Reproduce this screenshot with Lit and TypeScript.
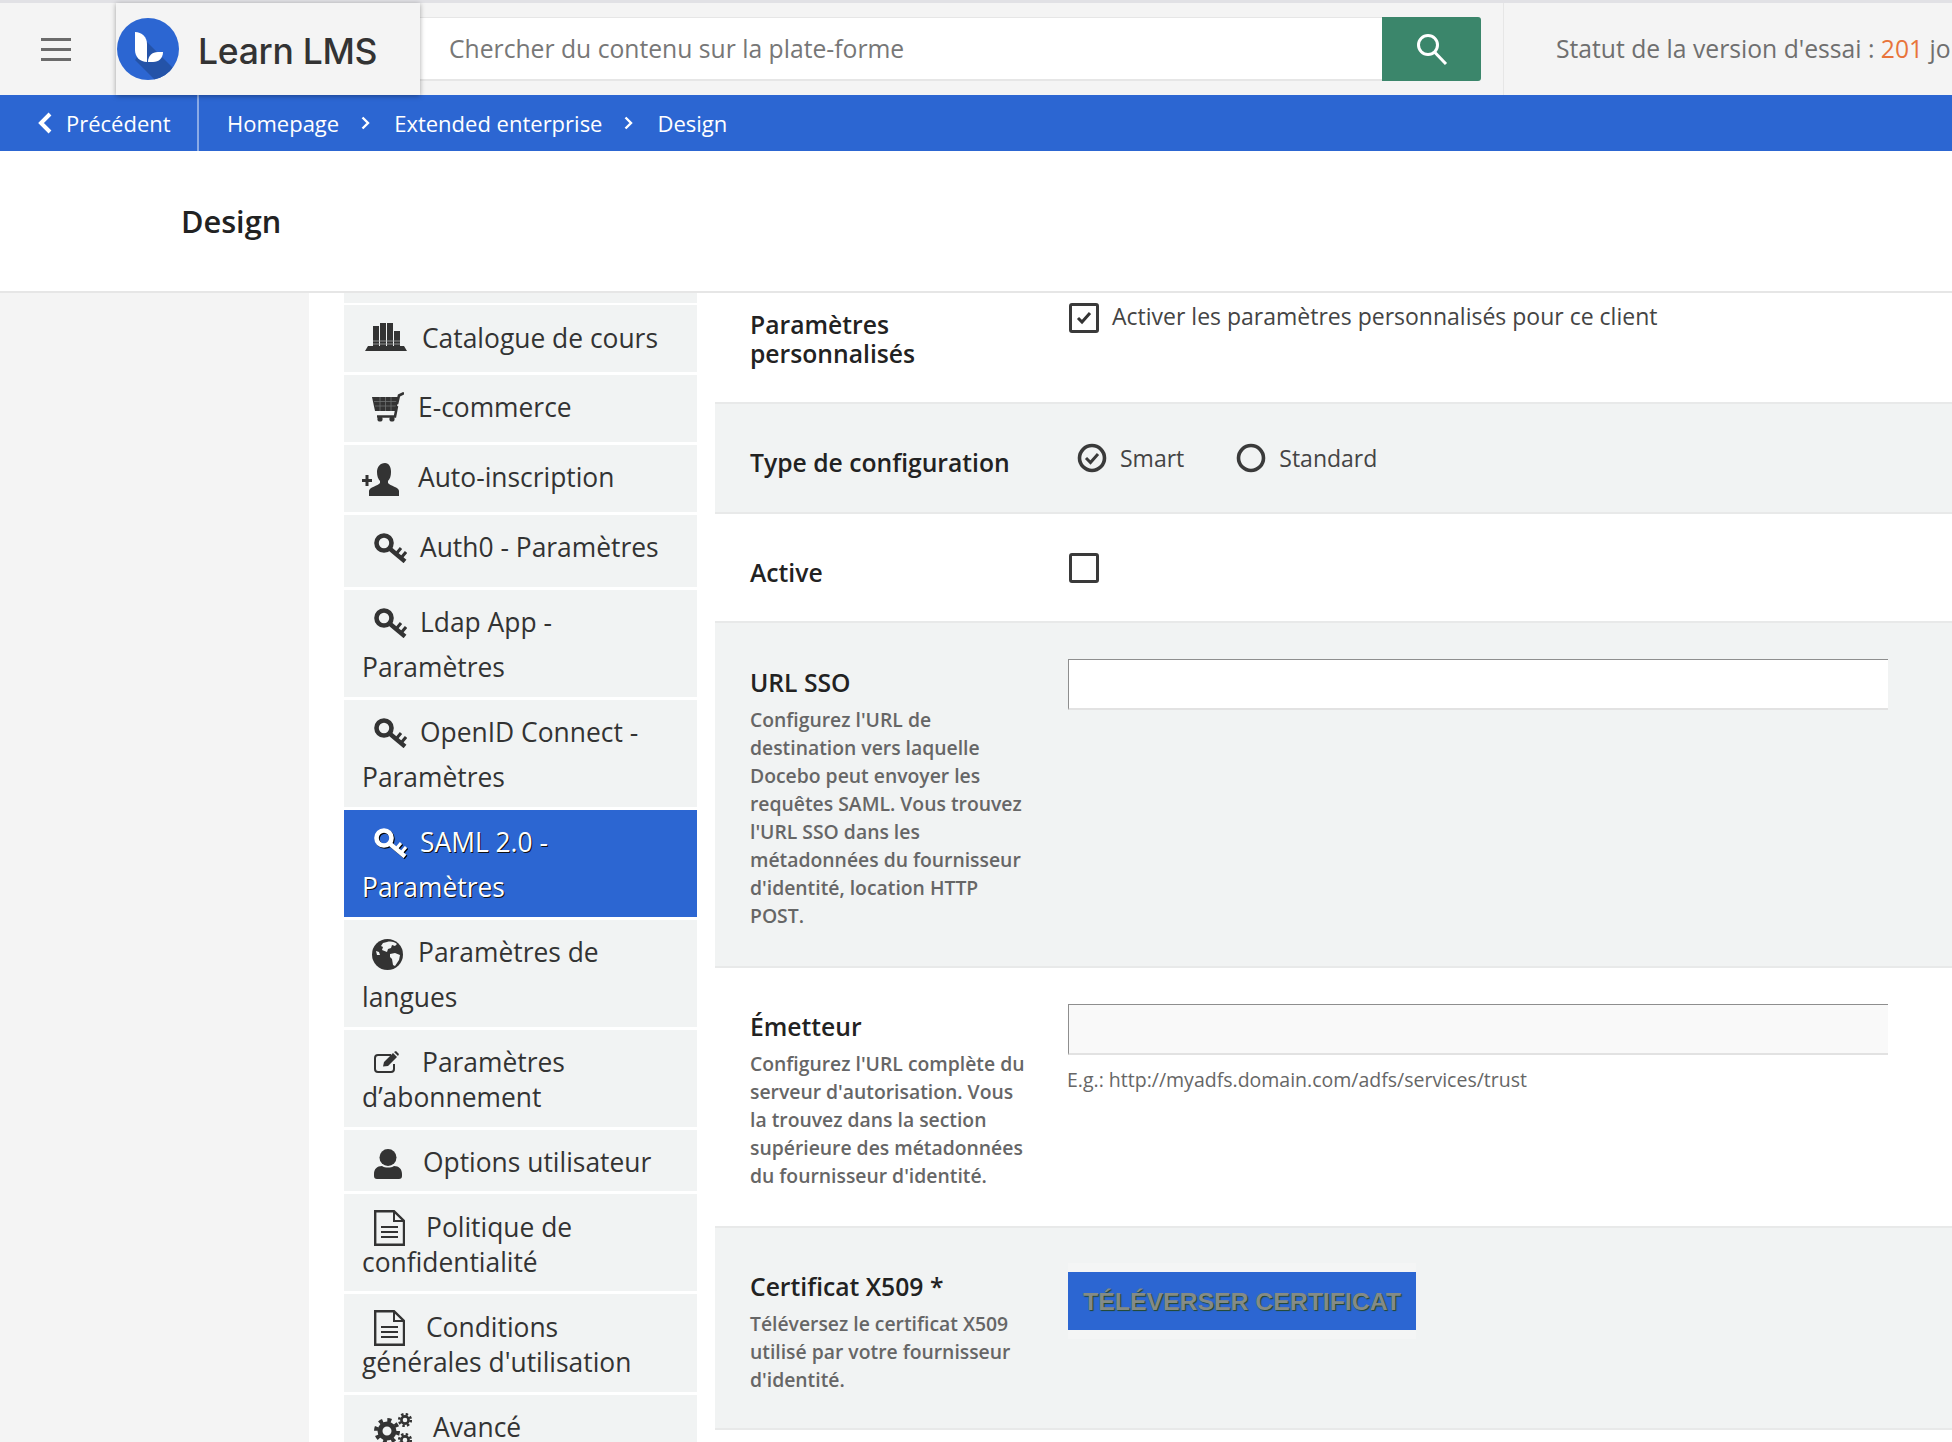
import { LitElement, css, html, svg } from "lit";
import { customElement } from "lit/decorators.js";

const ICONS: Record<string, any> = {
  books: svg`<path d="M0 28 3 23H39L42 28Z"/><path d="M8 3h6v21H8zM15 0h6v24h-6zM22 0h6v24h-6zM29 8h6v16h-6z"/><path d="M8 18h27M8 21h27" stroke="#a9abab" stroke-width=".8"/>`,
  cart: svg`<path d="M0 5H27L24 19H3Z"/><path d="M2 9.500h24M3 14h21M8 5v14M13.500 5v14M19 5v14" stroke="#6f7171" stroke-width=".8"/><path d="M25 12 27 3.500 32 1" fill="none" stroke="#333" stroke-width="2.600"/><path d="M25 14 23 24.500H5" fill="none" stroke="#333" stroke-width="2.600"/><circle cx="8" cy="27" r="2.600"/><circle cx="20" cy="27" r="2.600"/>`,
  add: svg`<path d="M3.500 12h3v4H10v3H6.500v4h-3v-4H0v-3h3.500z"/><path d="M23 0c-5 0-8 4-8 9 0 4 1 7 3 9v2c-2 3-11 4-11 8v5H37v-5c0-4-9-5-11-8v-2c2-2 3-5 3-9 0-5-2-9-6-9Z"/>`,
  key: svg`<circle cx="10" cy="10" r="7.500" fill="none" stroke="currentColor" stroke-width="4.600"/><path d="M15 15 31 28.500" fill="none" stroke="currentColor" stroke-width="4.400"/><path d="M22 21 27 15M27 25 32 19" fill="none" stroke="currentColor" stroke-width="3"/>`,
  globe: svg`<circle cx="15.500" cy="15.500" r="15.500"/><path d="M15 3c4-1 8 0 10 2l-2 2-3-1-1 3-3 1-1 3-5-2 1-3-2-1 2-3ZM18 15l5-1 5 2-1 5-4 6-2-1-1-6-2-2ZM4 12l3 1 1 3-3 0Z" fill="#f1f3f3"/>`,
  edit: svg`<path d="M20 13v5a3 3 0 0 1-3 3H4a3 3 0 0 1-3-3V7a3 3 0 0 1 3-3h13" fill="none" stroke="#333" stroke-width="2"/><path d="M9 15.500 10 11 19 2 23 6 14 15ZM20 1l2-1 3 3-1 2Z"/>`,
  user: svg`<circle cx="14" cy="8.500" r="8.500"/><path d="M0 25c0-5 3-8 8-8 3 2 9 2 12 0 5 0 8 3 8 8v2a3 3 0 0 1-3 3H3a3 3 0 0 1-3-3Z"/>`,
  doc: svg`<path d="M1.200 1.200H20L30 11V34.800H1.200Z" fill="none" stroke="#333" stroke-width="2.400"/><path d="M20 1v10h10" fill="none" stroke="#333" stroke-width="2"/><path d="M7 17h17M7 22h17M7 27h17" stroke="#333" stroke-width="2.200"/>`,
  gears: svg`<g fill="none" stroke="#333"><circle cx="13" cy="18" r="7" stroke-width="5"/><circle cx="13" cy="18" r="11" stroke-width="4" stroke-dasharray="4 4.640"/><circle cx="31" cy="7" r="3.600" stroke-width="2.600"/><circle cx="31" cy="7" r="5.800" stroke-width="2.600" stroke-dasharray="2.400 2.150"/><circle cx="31" cy="27" r="3.600" stroke-width="2.600"/><circle cx="31" cy="27" r="5.800" stroke-width="2.600" stroke-dasharray="2.400 2.150"/></g>`,
};

type MenuItem = {
  label: string;
  icon: string;
  box: [number, number];
  before: number;
  after: number;
  height: number;
  top: number;
  lift?: number;
  tight?: boolean;
  active?: boolean;
};

const MENU: MenuItem[] = [
  { label: "Catalogue de cours", icon: "books", box: [42, 28], before: 3, after: 15, height: 67, top: 11, lift: 4 },
  { label: "E-commerce", icon: "cart", box: [32, 30], before: 10, after: 14, height: 67, top: 10, lift: 3 },
  { label: "Auto-inscription", icon: "add", box: [37, 33], before: 0, after: 19, height: 67, top: 10 },
  { label: "Auth0 - Paramètres", icon: "key", box: [33, 30], before: 12, after: 13, height: 72, top: 10, lift: 2 },
  { label: "Ldap App - Paramètres", icon: "key", box: [33, 30], before: 12, after: 13, height: 107, top: 10, lift: 2 },
  { label: "OpenID Connect - Paramètres", icon: "key", box: [33, 30], before: 12, after: 13, height: 107, top: 10, lift: 2 },
  { label: "SAML 2.0 - Paramètres", icon: "key", box: [33, 30], before: 12, after: 13, height: 107, top: 10, lift: 2, active: true },
  { label: "Paramètres de langues", icon: "globe", box: [31, 31], before: 10, after: 15, height: 107, top: 10 },
  { label: "Paramètres d’abonnement", icon: "edit", box: [27, 22], before: 12, after: 21, height: 97, top: 15, lift: 3, tight: true },
  { label: "Options utilisateur", icon: "user", box: [28, 30], before: 12, after: 21, height: 61, top: 15, lift: 1, tight: true },
  { label: "Politique de confidentialité", icon: "doc", box: [31, 36], before: 12, after: 21, height: 97, top: 16, lift: 2, tight: true },
  { label: "Conditions générales d'utilisation", icon: "doc", box: [31, 36], before: 12, after: 21, height: 98, top: 16, lift: 2, tight: true },
  { label: "Avancé", icon: "gears", box: [38, 34], before: 12, after: 21, height: 70, top: 15, tight: true },
];

@customElement("app-root")
export class AppRoot extends LitElement {
  static styles = css`
    :host {
      display: block;
      width: 1952px;
      height: 1442px;
      overflow: hidden;
      background: #fff;
      font-family: "Open Sans", "Noto Sans", sans-serif;
      color: #333;
    }
    .topbar {
      display: flex;
      height: 92px;
      background: #f4f4f4;
      border-top: 3px solid #e1e1e5;
    }
    .burger {
      width: 116px;
      display: flex;
      flex-direction: column;
      gap: 7px;
      padding: 35px 0 0 41px;
      box-sizing: border-box;
    }
    .burger span {
      display: block;
      width: 30px;
      height: 3px;
      background: #6b6b6b;
    }
    .brand {
      position: relative;
      z-index: 2;
      width: 304px;
      display: flex;
      align-items: flex-start;
      gap: 19px;
      background: #f4f4f4;
      box-shadow: 0 1px 5px rgba(0, 0, 0, 0.35);
      padding: 15px 0 0 1px;
      box-sizing: border-box;
    }
    .brand-name {
      font-family: "Inter", sans-serif;
      font-weight: 500;
      font-size: 35.5px;
      line-height: 62px;
      margin-top: 3px;
      letter-spacing: -0.3px;
      color: #333;
      white-space: nowrap;
    }
    .search {
      display: flex;
      margin: 14px 0 0 0;
      height: 64px;
    }
    .search input {
      width: 962px;
      box-sizing: border-box;
      border: 0;
      border-top: 1px solid #e6e6e6;
      border-bottom: 2px solid #e6e6e6;
      outline: 0;
      padding: 0 0 0 29px;
      font: 400 24.7px "Open Sans", sans-serif;
      color: #777;
      background: #fff;
    }
    .search input::placeholder {
      color: #777;
      opacity: 1;
    }
    .search-btn {
      width: 99px;
      background: #3b866b;
      border-radius: 0 3px 3px 0;
      display: flex;
      align-items: center;
      justify-content: center;
    }
    .trial {
      margin-left: 22px;
      flex: 1;
      min-width: 0;
      border-left: 1px solid #e6e6e6;
      padding-left: 52px;
      font-size: 24.7px;
      line-height: 91px;
      color: #6f6f6f;
      white-space: nowrap;
      overflow: hidden;
    }
    .trial b {
      font-weight: 400;
      color: #e8743b;
    }
    .crumbs {
      display: flex;
      align-items: center;
      height: 56px;
      background: #2c66d2;
      color: #fff;
      font-size: 22px;
      line-height: 54px;
    }
    .back {
      width: 199px;
      height: 100%;
      box-sizing: border-box;
      display: flex;
      align-items: center;
      gap: 14px;
      padding-left: 38px;
      border-right: 2px solid #8aaae6;
    }
    .trail {
      display: flex;
      align-items: center;
      padding-left: 28px;
    }
    .trail svg {
      margin: 0 24px 0 22px;
    }
    .title {
      height: 142px;
      box-sizing: border-box;
      border-bottom: 2px solid #e6e6e6;
      padding: 0 0 0 181px;
    }
    .title h1 {
      margin: 0;
      font-size: 30.7px;
      font-weight: 600;
      line-height: 140px;
      color: #222;
    }
    .main {
      display: flex;
      height: 1149px;
      overflow: hidden;
    }
    .gutter {
      width: 309px;
      background: #f4f4f4;
      flex: none;
    }
    .side {
      width: 353px;
      margin: 0 18px 0 35px;
      flex: none;
      display: flex;
      flex-direction: column;
      gap: 3px;
    }
    .stub {
      height: 10px;
      margin-bottom: -1px;
      background: #f1f3f3;
      flex: none;
    }
    .item {
      flex: none;
      box-sizing: border-box;
      padding: 0 24px 0 18px;
      background: #f1f3f3;
      font-size: 26.4px;
      line-height: 45px;
      color: #333;
      overflow: hidden;
    }
    .item.tight {
      line-height: 35px;
    }
    .item svg {
      vertical-align: middle;
      fill: currentColor;
      margin-block: -8px;
    }
    .item.active {
      background: #2c66d2;
      color: #fff;
      text-shadow: 1px 1px 0 #111;
    }
    .item.active svg {
      filter: drop-shadow(1px 1px 0 #000);
    }
    .content {
      flex: 1;
      min-width: 0;
    }
    .row {
      display: grid;
      grid-template-columns: 318px 1fr;
      box-sizing: border-box;
      padding: 0 64px 0 35px;
      border-bottom: 2px solid #e8e9e9;
    }
    .row.grey {
      background: #f1f3f3;
    }
    .row-custom {
      height: 111px;
    }
    .row-type {
      height: 110px;
    }
    .row-active {
      height: 109px;
    }
    .row-url {
      height: 345px;
    }
    .row-issuer {
      height: 260px;
    }
    .row-cert {
      height: 202px;
    }
    .label {
      font-size: 24.7px;
      font-weight: 600;
      line-height: 29px;
      color: #222;
    }
    .label.top {
      padding-top: 45px;
    }
    .row-issuer .label.top,
    .row-cert .label.top {
      padding-top: 44px;
    }
    .label.custom {
      padding-top: 17px;
    }
    .label.mid {
      padding-top: 44px;
    }
    .desc {
      font-size: 19.35px;
      font-weight: 600;
      line-height: 28px;
      color: #666;
      margin-top: 9px;
      width: 280px;
    }
    .opt {
      display: flex;
      align-items: center;
      font-size: 23px;
      color: #444;
    }
    .opt.custom {
      height: 30px;
      margin-top: 10px;
      gap: 13px;
      padding-left: 1px;
    }
    .opt.custom span {
      margin-bottom: 4px;
    }
    .opt.type {
      height: 30px;
      margin-top: 39px;
      padding-left: 9px;
    }
    .opt.type svg {
      margin-right: 13px;
    }
    .opt.type span {
      margin-right: 52px;
    }
    .opt.solo {
      height: 30px;
      margin-top: 39px;
      padding-left: 1px;
    }
    .check {
      width: 30px;
      height: 30px;
      box-sizing: border-box;
      border: 3px solid #3a3a3a;
      border-radius: 3px;
      background: #fff;
      display: flex;
      align-items: center;
      justify-content: center;
    }
    .field {
      display: block;
      width: 100%;
      height: 51px;
      box-sizing: border-box;
      margin-top: 36px;
      border: 0;
      border-top: 1px solid #8e8e8e;
      border-left: 1px solid #8e8e8e;
      border-bottom: 2px solid #e2e2e2;
      background: #fff;
      outline: 0;
    }
    .field.off {
      background: #f9f9f9;
    }
    .hint {
      margin: 11px 0 0 -1px;
      font-size: 19.5px;
      line-height: 28px;
      color: #666;
    }
    .upload {
      align-self: start;
      justify-self: start;
      margin-top: 35px;
      padding: 9px 0;
      background: #f4f5f5;
    }
    .upload button {
      display: block;
      width: 348px;
      height: 58px;
      border: 0;
      padding: 2px 0 0;
      background: #2c66d2;
      font: 700 24.8px "Liberation Sans", Arial, sans-serif;
      color: #848b86;
      text-shadow: 1px 1px 1px #24472a;
    }
  `;

  renderItem(item: MenuItem) {
    const [w, h] = item.box;
    const cls = `item${item.tight ? " tight" : ""}${item.active ? " active" : ""}`;
    return html`<div class=${cls} style="height:${item.height}px;padding-top:${item.top}px">
      <svg
        width=${w}
        height=${h}
        viewBox="0 0 ${w} ${h}"
        style="margin-left:${item.before}px;margin-right:${item.after}px;transform:translateY(-${item.lift ?? 0}px)"
      >${ICONS[item.icon]}</svg>${item.label}
    </div>`;
  }

  render() {
    return html`
      <div class="topbar">
        <div class="burger"><span></span><span></span><span></span></div>
        <div class="brand">
          <svg width="62" height="62" viewBox="0 0 62 62">
            <defs>
              <clipPath id="disc"><circle cx="31" cy="31" r="31" /></clipPath>
            </defs>
            <circle cx="31" cy="31" r="31" fill="#2c66d2" />
            <path d="M30 24 62 56V62H38L18 42Z" fill="#2453a8" clip-path="url(#disc)" />
            <path d="M18 14c7 0 12 5 12 12v18c-7 0-12-5-12-12Z" fill="#fff" />
            <path d="M31 44c0-6 4-10 10-10h5c0 6-4 10-10 10Z" fill="#fff" />
          </svg>
          <span class="brand-name">Learn LMS</span>
        </div>
        <div class="search">
          <input placeholder="Chercher du contenu sur la plate-forme" />
          <div class="search-btn">
            <svg width="32" height="32" viewBox="0 0 32 32" fill="none" stroke="#fff" stroke-width="3">
              <circle cx="12" cy="12" r="9.500" />
              <path d="M18.500 19 30 31" />
            </svg>
          </div>
        </div>
        <div class="trial">Statut de la version d'essai : <b>201</b> jours</div>
      </div>
      <div class="crumbs">
        <div class="back">
          <svg width="14" height="22" viewBox="0 0 14 22" fill="none" stroke="#fff" stroke-width="4">
            <path d="M12 2 3 11l9 9" />
          </svg>
          Précédent
        </div>
        <div class="trail">
          Homepage
          <svg width="9" height="14" viewBox="0 0 9 14" fill="none" stroke="#fff" stroke-width="2.400">
            <path d="M1.500 1.500 7 7l-5.500 5.500" />
          </svg>
          Extended enterprise
          <svg width="9" height="14" viewBox="0 0 9 14" fill="none" stroke="#fff" stroke-width="2.400">
            <path d="M1.500 1.500 7 7l-5.500 5.500" />
          </svg>
          Design
        </div>
      </div>
      <div class="title"><h1>Design</h1></div>
      <div class="main">
        <div class="gutter"></div>
        <div class="side">
          <div class="stub"></div>
          ${MENU.map((item) => this.renderItem(item))}
        </div>
        <div class="content">
          <div class="row row-custom">
            <div class="label custom">Paramètres<br />personnalisés</div>
            <div class="opt custom">
              <div class="check">
                <svg width="16" height="14" viewBox="0 0 16 14" fill="none" stroke="#333" stroke-width="3">
                  <path d="M2 7l4 4 8-9" />
                </svg>
              </div>
              <span>Activer les paramètres personnalisés pour ce client</span>
            </div>
          </div>
          <div class="row row-type grey">
            <div class="label mid">Type de configuration</div>
            <div class="opt type">
              <svg width="30" height="30" viewBox="0 0 30 30" fill="none" stroke="#3a3a3a">
                <circle cx="15" cy="15" r="12.500" stroke-width="3.600" />
                <path d="M9 15l4.500 4.500L21 11" stroke-width="3" />
              </svg>
              <span>Smart</span>
              <svg width="30" height="30" viewBox="0 0 30 30" fill="none" stroke="#3a3a3a">
                <circle cx="15" cy="15" r="12.500" stroke-width="3.600" />
              </svg>
              <span>Standard</span>
            </div>
          </div>
          <div class="row row-active">
            <div class="label mid">Active</div>
            <div class="opt solo"><div class="check"></div></div>
          </div>
          <div class="row row-url grey">
            <div class="label top">
              URL SSO
              <div class="desc">
                Configurez l'URL de destination vers laquelle Docebo peut envoyer les requêtes
                SAML. Vous trouvez l'URL SSO dans les métadonnées du fournisseur d'identité,
                location HTTP POST.
              </div>
            </div>
            <div><input class="field" /></div>
          </div>
          <div class="row row-issuer">
            <div class="label top">
              Émetteur
              <div class="desc">
                Configurez l'URL complète du serveur d'autorisation. Vous la trouvez dans la
                section supérieure des métadonnées du fournisseur d'identité.
              </div>
            </div>
            <div>
              <input class="field off" />
              <div class="hint">E.g.: http://myadfs.domain.com/adfs/services/trust</div>
            </div>
          </div>
          <div class="row row-cert grey">
            <div class="label top">
              Certificat X509 *
              <div class="desc">
                Téléversez le certificat X509 utilisé par votre fournisseur d'identité.
              </div>
            </div>
            <div class="upload"><button>TÉLÉVERSER CERTIFICAT</button></div>
          </div>
        </div>
      </div>
    `;
  }
}
